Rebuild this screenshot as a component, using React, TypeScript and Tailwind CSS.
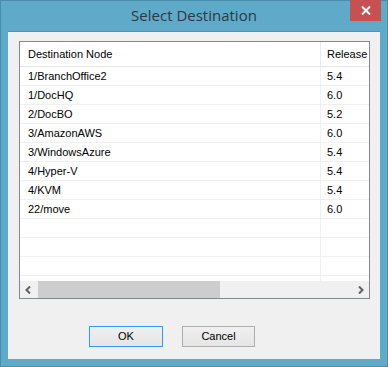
import React from "react";

const rows: [string, string][] = [
  ["1/BranchOffice2", "5.4"],
  ["1/DocHQ", "6.0"],
  ["2/DocBO", "5.2"],
  ["3/AmazonAWS", "6.0"],
  ["3/WindowsAzure", "5.4"],
  ["4/Hyper-V", "5.4"],
  ["4/KVM", "5.4"],
  ["22/move", "6.0"],
  ["", ""],
  ["", ""],
  ["", ""],
  ["", ""],
];

export default function App() {
  const sans = { fontFamily: '"Liberation Sans", Arial, sans-serif' };
  return (
    <div className="w-[388px] h-[367px] bg-[#5fa9c9] border border-[#4b8cab] flex flex-col">
      <div className="relative h-[30px] flex items-center justify-center">
        <span
          className="text-[15px] text-[#2b3a42] mt-[-1px]"
          style={{ fontFamily: '"Open Sans", "Noto Sans", sans-serif' }}
        >
          Select Destination
        </span>
        <div className="absolute right-[6px] top-[-1px] w-[31px] h-[21px] bg-[#c75050] flex items-center justify-center">
          <svg width="10" height="9" viewBox="0 0 10 9">
            <path d="M1 0.5 L9 8.5 M9 0.5 L1 8.5" stroke="#fff" strokeWidth="2" />
          </svg>
        </div>
      </div>
      <div className="mx-[7px] mb-[7px] flex-1 bg-[#f0f0f0] border-t border-[#4f92b1] flex flex-col pl-[11px] pt-[9px]" style={sans}>
        <div className="w-[351px] h-[258px] border border-[#828790] bg-white flex flex-col overflow-hidden text-[11px] text-black">
          <div className="flex h-[25px] border-b border-[#e5e5e5] shrink-0">
            <div className="w-[301px] pl-[8px] flex items-center border-r border-[#e3ecf4]">Destination Node</div>
            <div className="flex-1 pl-[6px] flex items-center">Release</div>
          </div>
          <div className="flex-1 overflow-hidden flex flex-col">
            {rows.map(([n, r], i) => (
              <div key={i} className="flex h-[19px] border-b border-[#f0f0f0] shrink-0">
                <div className="w-[301px] pl-[8px] flex items-center border-r border-[#f0f0f0]">{n}</div>
                <div className="flex-1 pl-[6px] flex items-center">{r}</div>
              </div>
            ))}
          </div>
          <div className="h-[17px] bg-[#f0f0f0] flex shrink-0">
            <div className="w-[17px] flex items-center justify-center">
              <svg width="7" height="8" viewBox="0 0 7 8">
                <path d="M5 0.5 L1.5 4 L5 7.5" stroke="#606060" strokeWidth="2" fill="none" />
              </svg>
            </div>
            <div className="w-[182px] bg-[#cdcdcd] ml-[1px]" />
            <div className="flex-1" />
            <div className="w-[17px] flex items-center justify-center">
              <svg width="7" height="8" viewBox="0 0 7 8">
                <path d="M2 0.5 L5.5 4 L2 7.5" stroke="#606060" strokeWidth="2" fill="none" />
              </svg>
            </div>
          </div>
        </div>
        <div className="flex mt-[27px] pl-[70px] gap-[19px] text-[11px] text-black">
          <button className="w-[74px] h-[21px] border border-[#3399ff] bg-gradient-to-b from-[#f0f0f0] to-[#e5e5e5] flex items-center justify-center">OK</button>
          <button className="w-[73px] h-[21px] border border-[#adadad] bg-gradient-to-b from-[#f0f0f0] to-[#e5e5e5] flex items-center justify-center">Cancel</button>
        </div>
      </div>
    </div>
  );
}
